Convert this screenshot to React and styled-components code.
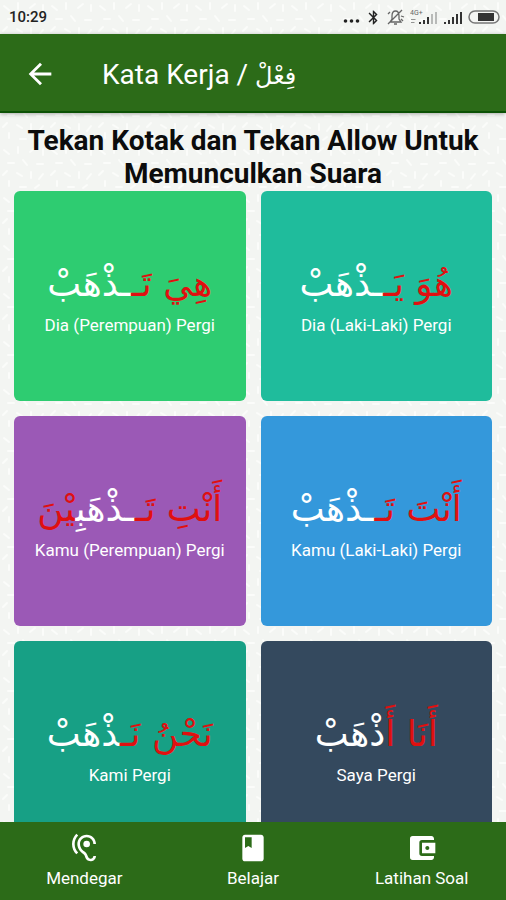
import React from 'react'
import styled, { createGlobalStyle } from 'styled-components'
import {
  MdAccountBalanceWallet,
  MdArrowBack,
  MdBluetooth,
  MdBook,
  MdHearing,
} from 'react-icons/md'

const cards = [
  {
    color: '#2ecc71',
    label: 'Dia (Perempuan) Pergi',
    parts: [['هِيَ تَـ', true], ['ـذْهَبْ']],
  },
  {
    color: '#1fbc9c',
    label: 'Dia (Laki-Laki) Pergi',
    parts: [['هُوَ يَـ', true], ['ـذْهَبْ']],
  },
  {
    color: '#9b59b6',
    label: 'Kamu (Perempuan) Pergi',
    parts: [['أَنْتِ تَـ', true], ['ـذْهَبِ'], ['يْنَ', true]],
  },
  {
    color: '#3498db',
    label: 'Kamu (Laki-Laki) Pergi',
    parts: [['أَنْتَ تَـ', true], ['ـذْهَبْ']],
  },
  {
    color: '#17a085',
    label: 'Kami Pergi',
    parts: [['نَحْنُ نَـ', true], ['ذْهَبْ']],
  },
  {
    color: '#34495e',
    label: 'Saya Pergi',
    parts: [['أَنَا أَ', true], ['ذْهَبْ']],
  },
]

const tabs = [
  { label: 'Mendegar', Icon: MdHearing },
  { label: 'Belajar', Icon: MdBook },
  { label: 'Latihan Soal', Icon: MdAccountBalanceWallet },
]

// small scattered dashes, tiled behind the page
const pattern = `url("data:image/svg+xml,${encodeURIComponent(
  '<svg xmlns="http://www.w3.org/2000/svg" width="48" height="48" fill="none" stroke="#fbfcfa" stroke-width="2" stroke-linecap="round"><path d="M4 6l5 4M18 3v6M30 8l5-4M43 5v6M8 19h6M23 16l4 5M37 20h6M3 31l4-4M17 29l5 3M31 28v6M43 30l-4 5M9 42v-5M20 43h6M35 44l4-3"/></svg>'
)}")`

const Dots = () => (
  <svg width="17" height="18" viewBox="0 0 17 18" fill="#222" aria-hidden="true">
    <circle cx="2.5" cy="13" r="1.8" />
    <circle cx="8.5" cy="13" r="1.8" />
    <circle cx="14.5" cy="13" r="1.8" />
  </svg>
)

const Muted = () => (
  <svg width="18" height="18" viewBox="0 0 18 18" fill="none" stroke="#666" strokeWidth="1.3" aria-hidden="true">
    <path d="M3 14h11l-2-3V8c0-3-1-5-3.5-5S5 5 5 8v3zM7 16h3M1 16L15 2M14 8l3 1M14 11l2 2M3 4L1 6" />
  </svg>
)

const Signal = ({ data }) => (
  <svg width={data ? 28 : 20} height="18" viewBox={data ? '0 0 28 18' : '8 0 20 18'} fill="#333" aria-hidden="true">
    {data && (
      <>
        <text x="0" y="7" fontSize="7" fontFamily="Roboto, sans-serif" fill="#666">4G+</text>
        <path d="M1 11h5l-1 1H1zM1 14h4l-1 1H1z" opacity="0.5" />
      </>
    )}
    <path d="M9 14h2v2H9zM13 12h2v4h-2zM17 9h2v7h-2z" />
    <path d="M21 6h2v10h-2zM25 4h2v12h-2z" opacity={data ? 0.3 : 1} />
  </svg>
)

const Battery = () => (
  <svg width="32" height="18" viewBox="0 0 32 18" aria-hidden="true">
    <rect x="1" y="3" width="30" height="12" rx="6" fill="#f4f5f3" stroke="#777" strokeWidth="1.5" />
    <path d="M10 5h16v8H10z" fill="#333" />
  </svg>
)

const App = () => (
  <Page>
    <GlobalStyle />
    <StatusBar>
      <Time>10:29</Time>
      <StatusIcons>
        <Dots />
        <MdBluetooth size={17} />
        <Muted />
        <Signal data />
        <Signal />
        <Battery />
      </StatusIcons>
    </StatusBar>
    <Header>
      <Back type="button" aria-label="Kembali">
        <MdArrowBack size={34} />
      </Back>
      <Title>
        Kata Kerja / <TitleArabic lang="ar">فِعْلْ</TitleArabic>
      </Title>
    </Header>
    <Main>
      <Heading>Tekan Kotak dan Tekan Allow Untuk Memunculkan Suara</Heading>
      <Grid>
        {cards.map(card => (
          <Card key={card.label} type="button" $color={card.color}>
            <Arabic lang="ar" dir="rtl">
              {card.parts.map(([text, marked]) => (
                <Part key={text} $marked={marked}>{text}</Part>
              ))}
            </Arabic>
            <Label>{card.label}</Label>
          </Card>
        ))}
      </Grid>
    </Main>
    <Nav>
      {tabs.map(({ label, Icon }) => (
        <Tab key={label} type="button">
          <Icon size={32} />
          {label}
        </Tab>
      ))}
    </Nav>
  </Page>
)

const GlobalStyle = createGlobalStyle`
  * {
    box-sizing: border-box;
  }
  body {
    margin: 0;
    font-family: Roboto, 'DejaVu Sans', sans-serif;
    background: #f3f5f2 ${pattern};
  }
  button {
    font: inherit;
    border: 0;
    padding: 0;
    cursor: pointer;
  }
`
const Page = styled.div`
  display: flex;
  flex-direction: column;
  height: 100vh;
  overflow: hidden;
`
const StatusBar = styled.div`
  display: flex;
  align-items: center;
  justify-content: space-between;
  flex: none;
  height: 34px;
  padding: 0 6px 0 9px;
  color: #222;
`
const Time = styled.span`
  font-size: 15px;
  font-weight: 500;
`
const StatusIcons = styled.div`
  display: flex;
  align-items: center;
  gap: 5px;
`
const Header = styled.header`
  display: flex;
  align-items: center;
  flex: none;
  gap: 45px;
  height: 79px;
  padding: 2px 23px 0;
  color: #fff;
  background: #2c6b18;
  border-bottom: 2px solid #0c5205;
  box-shadow: 0 1px 4px rgba(0, 0, 0, 0.3);
`
const Back = styled.button`
  display: flex;
  color: inherit;
  background: none;
`
const Title = styled.h1`
  margin: 0;
  padding-top: 4px;
  font-size: 28px;
  line-height: 36px;
  font-weight: 400;
`
const TitleArabic = styled.span`
  font-family: 'DejaVu Sans', sans-serif;
  font-size: 24px;
`
const Main = styled.main`
  flex: 1;
  min-height: 0;
  padding: 11px 14px 0;
  overflow-x: hidden;
  overflow-y: auto;
  scrollbar-width: none;
`
const Heading = styled.h2`
  margin: 0 0 1px;
  font-size: 28px;
  line-height: 33px;
  font-weight: 700;
  text-align: center;
  color: #0c0c0c;
`
const Grid = styled.div`
  display: grid;
  grid-template-columns: 1fr 1fr;
  grid-auto-rows: 210px;
  gap: 15px;
  padding-bottom: 15px;
`
const Card = styled.button`
  display: flex;
  flex-direction: column;
  align-items: center;
  justify-content: center;
  border-radius: 6px;
  color: #fff;
  background: ${props => props.$color};
`
const Arabic = styled.span`
  font-family: 'DejaVu Sans', sans-serif;
  font-size: 36px;
  line-height: 58px;
  white-space: nowrap;
`
const Part = styled.span`
  color: ${props => (props.$marked ? '#e01010' : '#fff')};
`
const Label = styled.span`
  font-size: 17px;
  line-height: 24px;
`
const Nav = styled.nav`
  display: grid;
  grid-template-columns: repeat(3, 1fr);
  flex: none;
  height: 78px;
  background: #2c6b18;
`
const Tab = styled.button`
  display: flex;
  flex-direction: column;
  align-items: center;
  justify-content: center;
  gap: 2px;
  font-size: 17px;
  line-height: 24px;
  color: #fff;
  background: none;
`

export default App
